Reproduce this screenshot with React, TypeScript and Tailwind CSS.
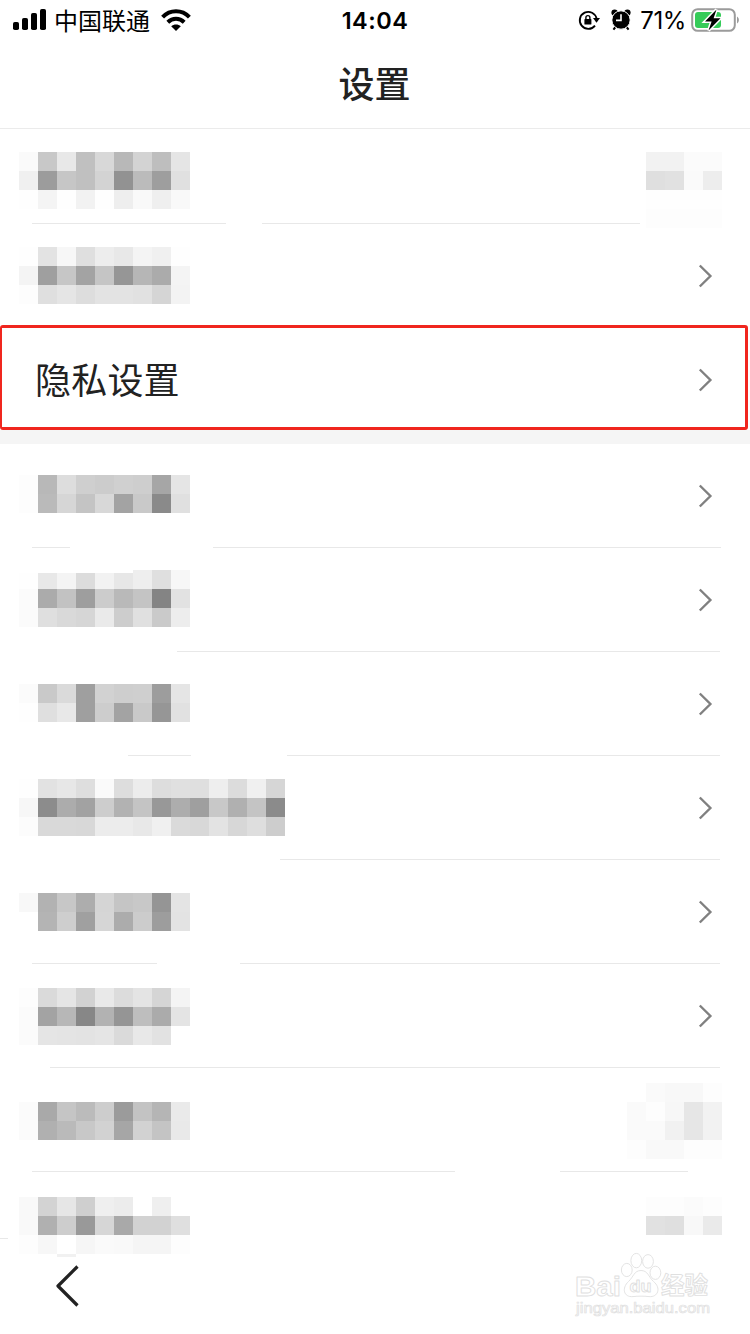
import React from 'react';

type Shades = string[];

interface RowData {
  height: string;
  left: Shades;
  leftPad: string;
  trim?: number;
  right?: Shades;
  rightPad?: string;
  arrow?: boolean;
  lines?: [number, number][];
}

// every pair of hex digits is the grey level of one 19px cell
const topRows: RowData[] = [
  {
    height: 'h-[95px]',
    leftPad: 'pt-[23px]',
    left: ['fac8e8c0d8b8d3bee5', 'f09cc6c0d392bb9ee0', 'fef4fef2feeef9eff9'],
    right: ['f2f2fbfb', 'dfe1faed', 'fefefefe', 'fdfdfdfd'],
    rightPad: 'pt-[23px]',
    lines: [[32, 226], [262, 640]],
  },
  {
    height: 'h-[101px]',
    leftPad: 'pt-[23px]',
    left: ['fee3f7dfede8f4f0fe', 'f49fc6a3c596b6abf4', 'fddfe5dde3e3e1d5f3'],
    arrow: true,
  },
];

const rows: RowData[] = [
  {
    height: 'h-[104px]',
    leftPad: 'pt-[31px]',
    left: ['fdb8ddcfccd0cea6e5', 'fdbad6c4d8a3c98ae0'],
    arrow: true,
    lines: [[32, 70], [213, 721]],
  },
  {
    height: 'h-[104px]',
    leftPad: 'pt-[22px]',
    left: ['fee8f4dcf2e7eedff7', 'fbabc29eccb9c484e2', 'fbdfd9d6eacde0caed'],
    trim: 6,
    arrow: true,
    lines: [[177, 720]],
  },
  {
    height: 'h-[104px]',
    leftPad: 'pt-[32px]',
    left: ['fbc9da9fd2cecf9de5', 'fedfe89fcda3c996e1'],
    arrow: true,
    lines: [[128, 191], [287, 720]],
  },
  {
    height: 'h-[104px]',
    leftPad: 'pt-[23px]',
    left: ['fee2e7defaddecdde0dfeedcf0d6', 'f78caca2cdb2c498ad9fc8b0c48b', 'fcd9d9d8ecece8f0dad8e3d7decd'],
    arrow: true,
    lines: [[280, 720]],
  },
  {
    height: 'h-[104px]',
    leftPad: 'pt-[33px]',
    left: ['f8b2c7add5c5c895e4', 'ffb4cea0d6accc9de3'],
    arrow: true,
    lines: [[32, 157], [240, 720]],
  },
  {
    height: 'h-[104px]',
    leftPad: 'pt-[24px]',
    left: ['fddae5d2e9dce4d5f4', 'fba3b787b295beabe4', 'fbe5e4e3e5dae8e2ff'],
    arrow: true,
    lines: [[50, 720]],
  },
  {
    height: 'h-[104px]',
    leftPad: 'pt-[34px]',
    left: ['fba9c5bbcd9bc3b5ea', 'fbb0bac8d2a6d2c4e9'],
    right: ['fffaf8f8fd', 'fafdf7e6f2', 'fafaf1e6f2', 'fdf9f9fdfd'],
    rightPad: 'pt-[15px]',
    lines: [[32, 455], [560, 688]],
  },
  {
    height: 'h-[67px]',
    leftPad: 'pt-[25px]',
    left: ['f9d3e6cfefecffefff', 'f9b0cd99d6a9d2d2df', 'fdf7fff6faf9f5f5fd'],
    right: ['fdfdfbfd', 'e1dff8ea'],
    rightPad: 'pt-[25px]',
    lines: [[0, 8]],
  },
];

const Mosaic: React.FC<{ shades: Shades; trim?: number }> = ({ shades, trim = 0 }) => (
  <div>
    {shades.map((line, y) => (
      <div key={y} className="flex">
        {(line.match(/../g) || []).map((v, x) => (
          <div
            key={x}
            className={`w-[19px] h-[19px] border-white ${y === 0 && x < trim ? 'border-t-[3px]' : ''}`}
            style={{ backgroundColor: `#${v}${v}${v}` }}
          />
        ))}
      </div>
    ))}
  </div>
);

const Chevron = () => (
  <svg className="w-4 h-6 shrink-0" viewBox="0 0 16 24" fill="none" stroke="#808080" strokeWidth="2.4">
    <path d="M1.8 1.5 L12.4 12 L1.8 22.5" />
  </svg>
);

const Divider: React.FC<{ lines: [number, number][] }> = ({ lines }) => (
  <div className="flex h-px">
    {lines.map(([from, to], i) => (
      <div
        key={from}
        className="h-px bg-[#e8e8e8]"
        style={{ marginLeft: from - (i ? lines[i - 1][1] : 0), width: to - from }}
      />
    ))}
  </div>
);

const Row: React.FC<{ row: RowData }> = ({ row }) => (
  <div className={`flex flex-col ${row.height}`}>
    <div className="flex flex-1 min-h-0 items-start justify-between pl-[19px] pr-7">
      <div className={row.leftPad}>
        <Mosaic shades={row.left} trim={row.trim} />
      </div>
      {row.right && (
        <div className={row.rightPad}>
          <Mosaic shades={row.right} />
        </div>
      )}
      {row.arrow && (
        <div className="flex h-[104px] items-center pr-2">
          <Chevron />
        </div>
      )}
    </div>
    {row.lines && <Divider lines={row.lines} />}
  </div>
);

const StatusBar = () => (
  <div className="grid grid-cols-3 h-10 items-center text-black">
    <div className="flex items-center pl-[13px]">
      <svg className="w-[34px] h-[22px]" viewBox="0 0 34 22">
        <rect x="0" y="13" width="6" height="8" rx="1.8" />
        <rect x="9" y="9" width="6" height="12" rx="1.8" />
        <rect x="18" y="4" width="6" height="17" rx="1.8" />
        <rect x="27" y="0" width="6" height="21" rx="1.8" />
      </svg>
      <span className="ml-[7px] text-[24px] leading-[38px] font-['Noto_Sans_CJK_SC',sans-serif] whitespace-nowrap">中国联通</span>
      <svg className="ml-[11px] w-[30px] h-[22px]" viewBox="0 0 30 22" fill="none" stroke="#000" strokeWidth="4">
        <path d="M1.6 8.2 C9 .4 21 .4 28.4 8.2" />
        <path d="M6.8 13.2 C11.5 8.6 18.5 8.6 23.2 13.2" />
        <path d="M15 22 L10.2 17.2 C12.8 14.9 17.2 14.9 19.8 17.2 Z" fill="#000" stroke="none" />
      </svg>
    </div>
    <div className="pt-0.5 text-center text-[23.5px] leading-[38px] font-semibold tracking-[0.5px] font-[Inter,sans-serif]">14:04</div>
    <div className="flex items-center justify-end pr-[11px]">
      <svg className="w-[22px] h-[22px]" viewBox="0 0 22 22" fill="none" stroke="#000" strokeWidth="1.9">
        <path d="M17 16.6 A8.5 8.5 0 1 1 18.6 9.6" />
        <path d="M15 9 H22 L18.5 13.8 Z" fill="#000" stroke="none" />
        <rect x="6.4" y="10" width="7" height="5.6" rx="0.7" fill="#000" stroke="none" />
        <path d="M7.9 10.4 V8.6 A2 2 0 0 1 11.9 8.6 V10.4" strokeWidth="1.4" />
      </svg>
      <svg className="ml-[11px] w-5 h-[22px]" viewBox="0 0 20 22">
        <path d="M4.5 18 L2.4 20.6 M15.5 18 L17.6 20.6" stroke="#000" strokeWidth="2" />
        <circle cx="3.6" cy="3.6" r="3.2" />
        <circle cx="16.4" cy="3.6" r="3.2" />
        <circle cx="10" cy="11" r="9.2" stroke="#fff" strokeWidth="1" />
        <path d="M10 5.2 V11.4 H5" fill="none" stroke="#fff" strokeWidth="1.6" />
      </svg>
      <span className="ml-[9px] pt-0.5 text-[24px] leading-[38px] tracking-[-0.4px] font-[Inter,sans-serif]">71%</span>
      <svg className="ml-[5px] w-12 h-6" viewBox="0 0 48 24">
        <rect x="1.2" y="1.2" width="42.6" height="21.6" rx="5.5" fill="#fff" stroke="#9b9b9b" strokeWidth="2" />
        <rect x="4" y="4" width="26" height="16" rx="3" fill="#35cb59" />
        <path d="M46 8.5 C48.5 10 48.5 14 46 15.5 Z" fill="#9b9b9b" />
        <path d="M25.5 1.5 L14 13.4 H20.6 L17.5 22.5 L29.5 10.2 H22.6 Z" fill="#000" stroke="#fff" strokeWidth="3" paintOrder="stroke" />
      </svg>
    </div>
  </div>
);

const Watermark = () => (
  <svg className="w-[140px] h-[68px]" viewBox="0 0 140 68" fill="#fff" stroke="#e0e0e0" strokeWidth="0.9" strokeLinejoin="round">
    <text x="3" y="43.5" fontSize="28" fontWeight="700" fontFamily="'Liberation Sans', sans-serif" textLength="46" lengthAdjust="spacingAndGlyphs">Bai</text>
    <ellipse cx="54.8" cy="18" rx="5.4" ry="6.6" />
    <ellipse cx="64.3" cy="8.6" rx="5.4" ry="7.2" />
    <ellipse cx="76" cy="9.4" rx="5.4" ry="6.8" />
    <ellipse cx="83.4" cy="20.8" rx="5.4" ry="6.6" />
    <path d="M69 18.5 C76 18.5 76.5 25 81.5 29.5 C89.5 36 86 45.5 77 44.6 C72 44 66 44 61 44.6 C51.5 45.5 49.5 36 56.5 29.5 C61.5 25 62 18.5 69 18.5 Z" />
    <text x="57.5" y="40" fontSize="17" fontWeight="700" fontFamily="'Liberation Sans', sans-serif" textLength="22" lengthAdjust="spacingAndGlyphs">du</text>
    <text x="89" y="42" fontSize="23.5" fontWeight="700" fontFamily="'Noto Sans CJK SC', sans-serif">经验</text>
    <text x="4" y="61" fontSize="14.5" fontWeight="400" strokeWidth="0.7" fontFamily="'Liberation Sans', sans-serif" textLength="134" lengthAdjust="spacingAndGlyphs">jingyan.baidu.com</text>
  </svg>
);

export default function App() {
  return (
    <div className="w-[750px] h-[1334px] bg-white overflow-hidden flex flex-col">
      <StatusBar />
      <header className="flex h-[89px] items-center justify-center pb-1 border-b border-[#ebebeb] font-['Noto_Sans_CJK_SC',sans-serif]">
        <h1 className="text-[36px] leading-[84px] font-medium text-[#222] -ml-px">设置</h1>
      </header>

      {topRows.map((row, i) => (
        <Row key={i} row={row} />
      ))}

      <div className="flex w-[748px] h-[105px] items-center justify-between border-[3px] border-l-2 border-[#f0261e] rounded-[3px] pt-[5px] pl-[33px] pr-[31px]">
        <span className="-mt-1 text-[36px] leading-[52px] tracking-[0.2px] text-[#222] font-['Noto_Sans_CJK_SC',sans-serif]">隐私设置</span>
        <Chevron />
      </div>
      <div className="h-[14px] bg-[#f5f5f5]" />

      {rows.map((row, i) => (
        <Row key={i} row={row} />
      ))}

      <footer className="flex flex-1 items-start justify-between pl-[55px] pr-[38px]">
        <div>
          <div className="mt-[15px] ml-0.5 w-[19px] h-[3px] bg-[#f1f1f1]" />
          <svg className="mt-[7px] w-6 h-[44px]" viewBox="0 0 24 44" fill="none" stroke="#222" strokeWidth="3.2">
            <path d="M22.5 2.5 L3 22 L22.5 41.5" strokeLinejoin="round" />
          </svg>
        </div>
        <div className="mt-[13px]">
          <Watermark />
        </div>
      </footer>
    </div>
  );
}
